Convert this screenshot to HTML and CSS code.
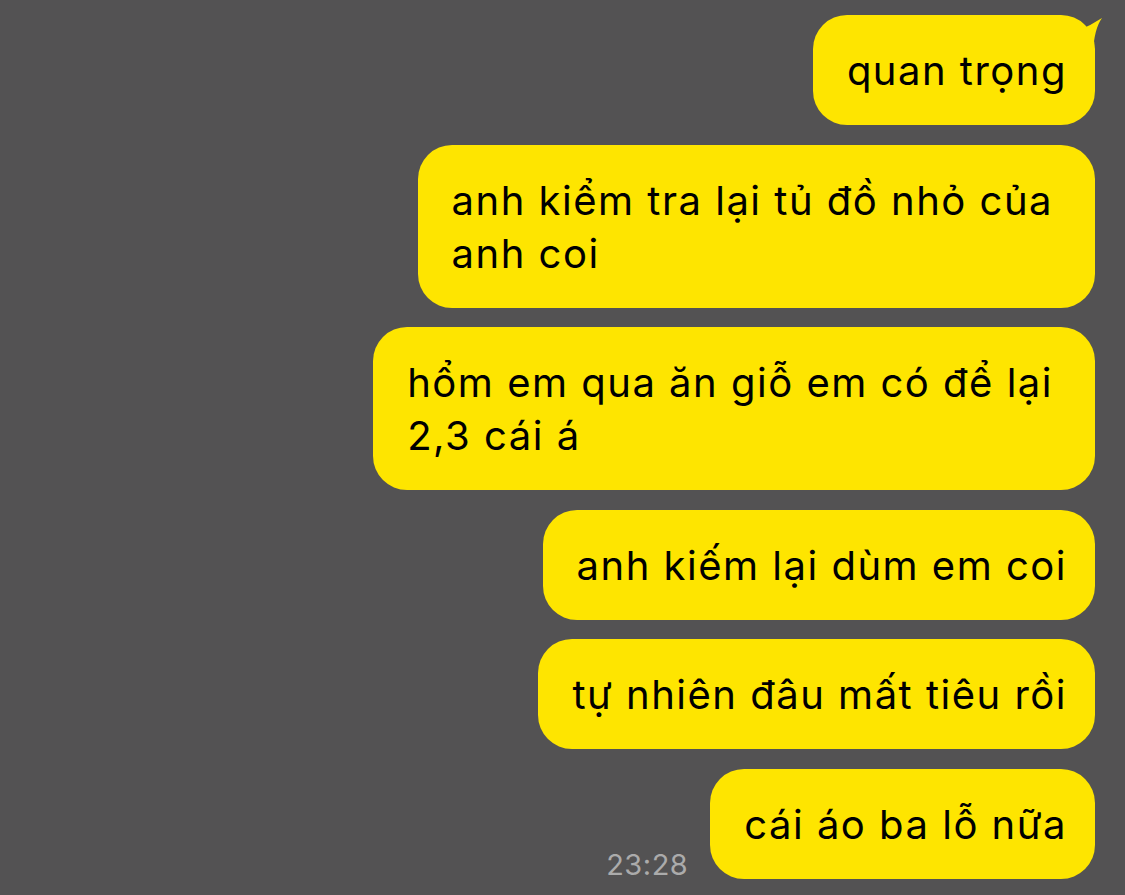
FILE: index.html
```html
<!DOCTYPE html>
<html lang="vi">
<head>
    <meta charset="UTF-8">
    <meta name="viewport" content="width=device-width, initial-scale=1.0">
    <title>Chat</title>
    <link rel="stylesheet" href="styles.css">
</head>
<body>
    <div class="chat">
        <div class="row">
            <div class="bubble first">
                quan trọng
                <svg class="tail" width="32" height="40" viewBox="0 0 32 40">
                    <path d="M4,16 Q17,11 29,3 Q21,14 20,38 L4,38 Z" fill="#fee500"/>
                </svg>
            </div>
        </div>
        <div class="row">
            <div class="bubble multi">anh kiểm tra lại tủ đồ nhỏ của<br>anh coi</div>
        </div>
        <div class="row">
            <div class="bubble multi">hổm em qua ăn giỗ em có để lại<br>2,3 cái á</div>
        </div>
        <div class="row">
            <div class="bubble">anh kiếm lại dùm em coi</div>
        </div>
        <div class="row">
            <div class="bubble">tự nhiên đâu mất tiêu rồi</div>
        </div>
        <div class="row">
            <span class="time">23:28</span>
            <div class="bubble">cái áo ba lỗ nữa</div>
        </div>
    </div>
</body>
</html>
```

FILE: styles.css
```css
body {
    margin: 0;
    background-color: #535253;
    font-family: Inter, "Liberation Sans", Arial, sans-serif;
    height: 100vh;
    overflow: hidden;
}

.chat {
    display: flex;
    flex-direction: column;
    align-items: flex-end;
    gap: 19.5px;
    padding: 15px 30px 0 0;
}

.row {
    display: flex;
    align-items: flex-end;
    gap: 22px;
}

.bubble {
    position: relative;
    background-color: #fee500;
    color: #000;
    font-size: 40px;
    line-height: 53px;
    letter-spacing: 1.5px;
    padding: 29px 28px 28px 34px;
    border-radius: 34px;
    white-space: nowrap;
}

.bubble.multi {
    padding-right: 42px;
}

.tail {
    position: absolute;
    top: 0;
    right: -10px;
}

.time {
    color: #ababab;
    font-size: 29px;
    line-height: 29px;
    letter-spacing: 0.5px;
}
```
